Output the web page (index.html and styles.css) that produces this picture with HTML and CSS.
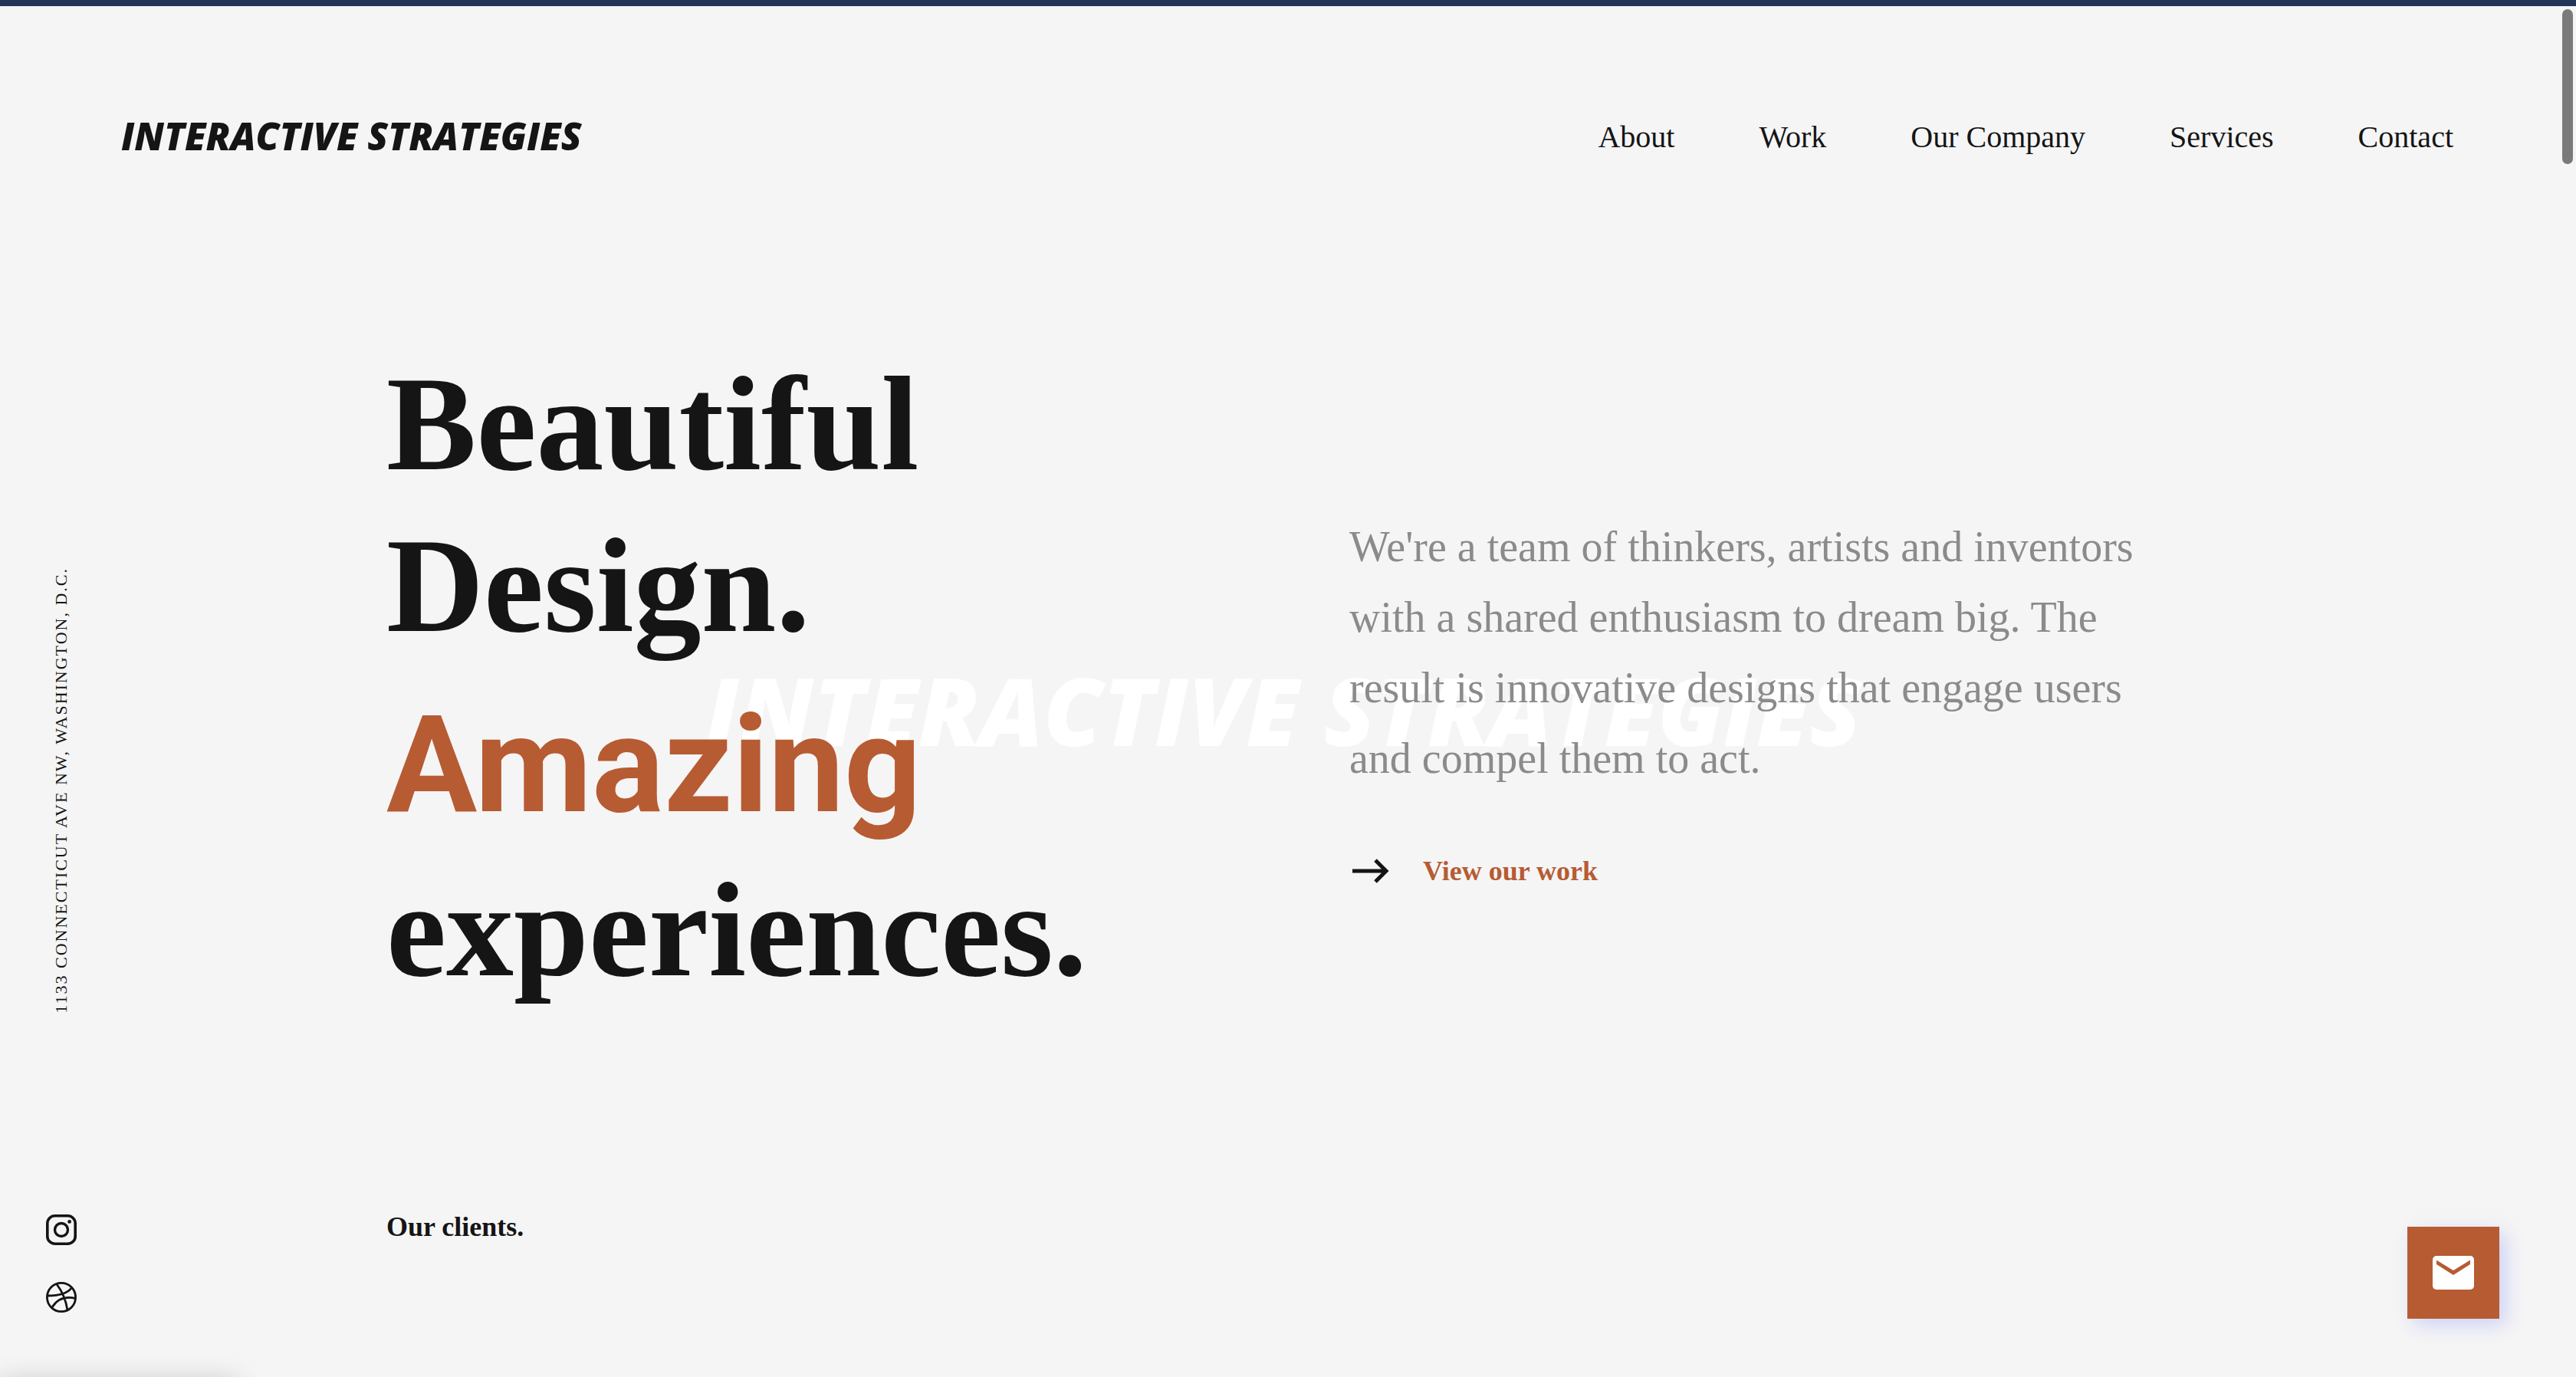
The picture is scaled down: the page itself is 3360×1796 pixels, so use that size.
FILE: index.html
```html
<!DOCTYPE html>
<html lang="en">
<head>
<meta charset="utf-8">
<meta name="viewport" content="width=device-width, initial-scale=1">
<title>Interactive Strategies</title>
<link rel="stylesheet" href="styles.css">
</head>
<body>
<div class="page">
  <header class="header">
    <a class="logo" href="#">INTERACTIVE STRATEGIES</a>
    <nav class="nav" aria-label="Main">
      <a href="#about">About</a>
      <a href="#work">Work</a>
      <a href="#company">Our Company</a>
      <a href="#services">Services</a>
      <a href="#contact">Contact</a>
    </nav>
  </header>
  <div class="body">
    <aside class="rail">
      <p class="address">1133 CONNECTICUT AVE NW, WASHINGTON, D.C.</p>
      <div class="social">
        <a href="#instagram" aria-label="Instagram">
          <svg viewBox="0 0 40 40" width="40" height="40" fill="none" stroke="currentColor">
            <rect x="1.8" y="1.8" width="36.4" height="36.4" rx="9.8" stroke-width="3.6"/>
            <circle cx="20" cy="20" r="8.5" stroke-width="3.4"/>
            <circle cx="30.6" cy="9.4" r="2.4" fill="currentColor" stroke="none"/>
          </svg>
        </a>
        <a href="#dribbble" aria-label="Dribbble">
          <svg viewBox="0 0 40 40" width="40" height="40" fill="none" stroke="currentColor" stroke-width="2.8">
            <circle cx="20" cy="20" r="18.6"/>
            <path d="M14 3C20.500 11.500 25.500 21.500 28 36.500M2 18C15 18 27.500 16 33.500 7.500M8 33C14.500 22.500 24.500 18.500 38 21.300"/>
          </svg>
        </a>
      </div>
    </aside>
    <main class="main">
      <section class="hero">
        <h1 class="headline">
          <span class="line">Beautiful</span>
          <span class="line">Design.</span>
          <span class="line accent">Amazing</span>
          <span class="line">experiences.</span>
        </h1>
        <div class="intro">
          <p class="lead">We're a team of thinkers, artists and inventors with a shared enthusiasm to dream big. The result is innovative designs that engage users and compel them to act.</p>
          <a class="more" href="#work">
            <svg viewBox="0 0 48 32" width="48" height="32" fill="none" stroke="currentColor" stroke-width="5"><path d="M0 16H44M30 2L44 16L30 30"/></svg>
            <span>View our work</span>
          </a>
        </div>
      </section>
      <h2 class="clients">Our clients.</h2>
    </main>
  </div>
  <div class="watermark" aria-hidden="true">INTERACTIVE STRATEGIES</div>
  <button class="mail" type="button" aria-label="Send us an email">
    <svg viewBox="0 0 54 44" width="54" height="44"><rect width="54" height="44" rx="5" fill="#fff"/><path d="M5 5.500L27 19L49 5.500V11L27 25L5 11Z" fill="#b75b33"/></svg>
  </button>
  <div class="thumb"></div>
  <div class="status"></div>
</div>
</body>
</html>
```
FILE: styles.css
```css
* { box-sizing: border-box; }

body {
  margin: 0;
  background: #f5f5f5;
  color: #151515;
  font-family: "Liberation Serif", "Times New Roman", serif;
}

h1, h2, p { margin: 0; }
a { color: inherit; text-decoration: none; }
svg { display: block; }

.page {
  position: relative;
  z-index: 0;
  min-height: 100vh;
  border-top: 8px solid #203557;
  overflow: hidden;
}

.header {
  display: flex;
  align-items: flex-start;
  justify-content: space-between;
  padding: 135px 160px 0 158px;
}

.logo, .watermark {
  font-family: "Open Sans", Lato, sans-serif;
  font-weight: 800;
  font-style: italic;
  white-space: nowrap;
}

.logo { font-size: 49px; line-height: 68px; }

.nav {
  display: flex;
  gap: 110px;
  font-size: 40px;
  line-height: 72px;
}

.body {
  display: grid;
  grid-template-columns: 160px minmax(0, 1fr);
}

.rail {
  display: flex;
  flex-direction: column;
  align-items: center;
  gap: 262px;
  width: 160px;
  padding-top: 525px;
}

.address {
  writing-mode: vertical-rl;
  transform: rotate(180deg);
  font-size: 22px;
  line-height: 24px;
  letter-spacing: 2px;
  white-space: nowrap;
}

.social {
  display: flex;
  flex-direction: column;
  gap: 48px;
}

.main { padding: 232px 15vw 0 calc(15vw - 160px); }

.hero {
  display: grid;
  grid-template-columns: 1fr 1fr;
  gap: 160px;
}

.headline { font-size: 176px; font-weight: 700; }
.line { display: block; line-height: 211px; }

.accent {
  padding-top: 20px;
  color: #b75b33;
  font-family: Roboto, sans-serif;
  line-height: 218px;
}

.intro { padding-top: 220px; }

.lead {
  max-width: 1080px;
  color: #8b8b8b;
  font-size: 56px;
  line-height: 92px;
}

.more {
  display: inline-flex;
  align-items: center;
  gap: 44px;
  margin-top: 80px;
  padding-left: 4px;
  font-size: 36px;
  font-weight: 700;
  line-height: 42px;
}

.more span { color: #b75b33; }

.clients {
  margin-top: 261px;
  font-size: 36px;
  line-height: 42px;
}

.watermark {
  position: absolute;
  z-index: -1;
  top: 850px;
  left: 0;
  right: 12px;
  color: #fff;
  font-size: 123px;
  line-height: 136px;
  text-align: center;
}

.mail {
  position: absolute;
  right: 100px;
  bottom: 76px;
  display: grid;
  place-items: center;
  width: 120px;
  height: 120px;
  padding: 0;
  border: 0;
  background: #b75b33;
  box-shadow: 8px 8px 24px #cdd1f6;
}

.thumb {
  position: absolute;
  top: 4px;
  right: 4px;
  width: 14px;
  height: 202px;
  border-radius: 7px;
  background: #7a7a7a;
}

.status {
  position: absolute;
  bottom: -46px;
  left: 0;
  width: 310px;
  height: 40px;
  box-shadow: 0 0 36px rgba(0, 0, 0, 0.2);
}
```
